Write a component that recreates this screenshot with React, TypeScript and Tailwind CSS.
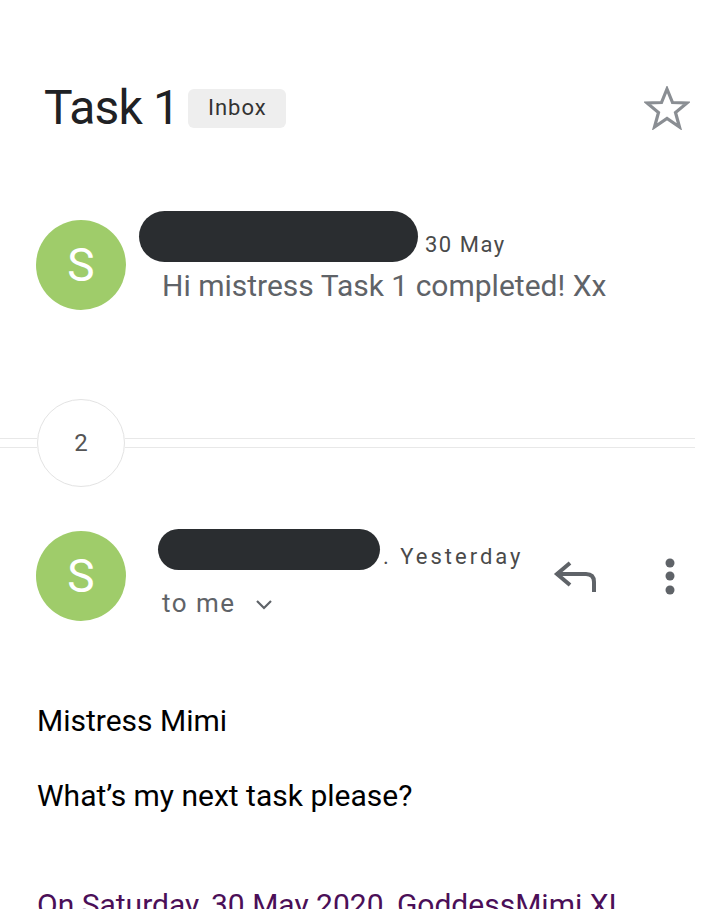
import React from 'react';

const font = { fontFamily: 'Roboto, "Noto Sans", sans-serif' };

const Avatar: React.FC = () => (
  <div className="w-[90px] h-[90px] shrink-0 rounded-full bg-[#9fcc6a] flex items-center justify-center">
    <span className="text-white text-[46px] leading-none">S</span>
  </div>
);

const StarIcon = () => (
  <svg width="46" height="44" viewBox="0 0 46 44" fill="none">
    <polygon
      points="23,3 28.5,16.5 43,17 31.5,26.5 35.5,41 23,32.5 10.5,41 14.5,26.5 3,17 17.5,16.5"
      stroke="#8a8e93"
      strokeWidth="3.2"
      strokeLinejoin="miter"
    />
  </svg>
);

const ReplyIcon = () => (
  <svg width="48" height="38" viewBox="0 0 48 38" fill="none">
    <path
      d="M18 5 L5 16 L18 27 M5 16 H34 Q42 16 42 24 V34"
      stroke="#5f6368"
      strokeWidth="4"
      strokeLinecap="butt"
      strokeLinejoin="miter"
    />
  </svg>
);

const MoreIcon = () => (
  <svg width="12" height="40" viewBox="0 0 12 40">
    <circle cx="6" cy="6" r="4.5" fill="#5f6368" />
    <circle cx="6" cy="19" r="4.5" fill="#5f6368" />
    <circle cx="6" cy="33" r="4.5" fill="#5f6368" />
  </svg>
);

const Chevron = () => (
  <svg width="18" height="12" viewBox="0 0 18 12" fill="none">
    <path d="M2 2 L9 9 L16 2" stroke="#5f6368" strokeWidth="2.2" />
  </svg>
);

export default function App() {
  return (
    <div className="w-[719px] h-[909px] bg-white overflow-hidden" style={font}>
      {/* Subject */}
      <div className="mt-[80px] h-[56px] flex items-center pl-[44px]">
        <h1 className="text-[48px] leading-none text-[#202124] tracking-[-0.8px]">Task 1</h1>
        <span className="ml-[9px] h-[39px] w-[98px] rounded-[6px] bg-[#eeeeee] flex items-center justify-center text-[22px] tracking-[1px] text-[#333] leading-none">
          Inbox
        </span>
        <div className="ml-auto mr-[29px]">
          <StarIcon />
        </div>
      </div>

      {/* Collapsed message */}
      <div className="mt-[75px] flex items-start pl-[36px]">
        <div className="mt-[9px]">
          <Avatar />
        </div>
        <div className="ml-[36px] flex flex-col">
          <div className="flex items-end">
            <div className="-ml-[23px] w-[279px] h-[51px] rounded-full bg-[#2a2d30]" />
            <span className="ml-[7px] mb-[6px] text-[22px] leading-none tracking-[1.5px] text-[#4a4a4a]">30 May</span>
          </div>
          <p className="mt-[6px] text-[30px] leading-[36px] text-[#5f6368]">
            Hi mistress Task 1 completed! Xx
          </p>
        </div>
      </div>

      {/* Hidden messages count */}
      <div className="mt-[89px] flex items-center w-[695px]">
        <div className="w-[37px] h-[10px] border-y border-[#e8e8e8]" />
        <div className="w-[88px] h-[88px] shrink-0 rounded-full border border-[#e3e3e3] bg-white flex items-center justify-center">
          <span className="text-[24px] leading-none text-[#555]">2</span>
        </div>
        <div className="flex-1 h-[10px] border-y border-[#e8e8e8]" />
      </div>

      {/* Expanded message header */}
      <div className="mt-[42px] flex items-start pl-[36px]">
        <div className="mt-[2px]">
          <Avatar />
        </div>
        <div className="ml-[36px] flex flex-col">
          <div className="flex items-end">
            <div className="-ml-[4px] w-[222px] h-[41px] rounded-full bg-[#2a2d30]" />
            <span className="ml-[3px] mb-[2px] text-[22px] leading-none tracking-[3px] text-[#4a4a4a]">. Yesterday</span>
          </div>
          <div className="mt-[17px] flex items-center">
            <span className="text-[26px] leading-[32px] tracking-[1.5px] text-[#5f6368]">to me</span>
            <span className="ml-[19px] mt-[4px]">
              <Chevron />
            </span>
          </div>
        </div>
        <div className="ml-auto mt-[29px] flex items-start">
          <ReplyIcon />
          <div className="ml-[64px] mr-[43px] -mt-[1px]">
            <MoreIcon />
          </div>
        </div>
      </div>

      {/* Body */}
      <div className="mt-[82px] pl-[37px] text-[30px] leading-[36px] text-black">
        <p>Mistress Mimi</p>
        <p className="mt-[39px]">What’s my next task please?</p>
        <p className="mt-[73px] text-[#4b0f58] whitespace-nowrap">On Saturday, 30 May 2020, GoddessMimi XI</p>
      </div>
    </div>
  );
}
